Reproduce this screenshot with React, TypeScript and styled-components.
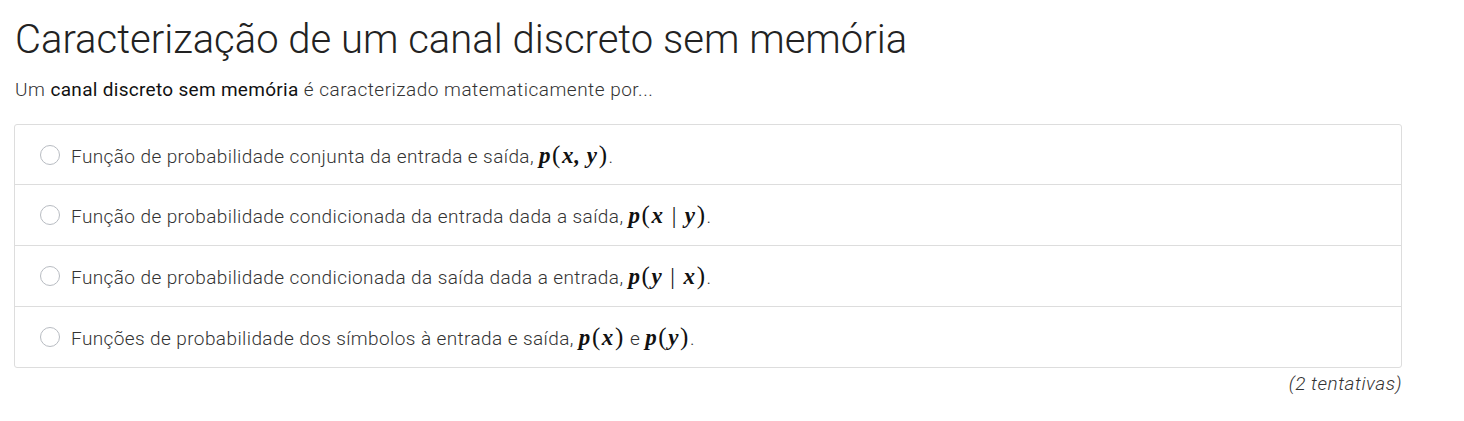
import React from "react";
import styled, { createGlobalStyle } from "styled-components";

const Global = createGlobalStyle`
  html, body { margin: 0; padding: 0; background: #fff; }
  body { font-family: Roboto, "Liberation Sans", sans-serif; color: #333; }
`;

const Page = styled.div`
  padding: 14px 62px 0 15px;
  display: flex;
  flex-direction: column;
`;

const Title = styled.h1`
  margin: 0;
  font-weight: 300;
  font-size: 40px;
  line-height: 52px;
  color: #222;
`;

const Lead = styled.p`
  margin: 12px 0 0 0;
  font-weight: 300;
  font-size: 19px;
  letter-spacing: 0.5px;
  line-height: 24px;
  color: #333;
  b { font-weight: 400; color: #111; letter-spacing: 0.3px; }
`;

const List = styled.div`
  margin: 22px 0 0 -1px;
  border: 1px solid #ddd;
  border-radius: 3px;
  display: flex;
  flex-direction: column;
`;

const Row = styled.label<{ $first?: boolean }>`
  display: flex;
  align-items: center;
  height: ${(p) => (p.$first ? "59px" : "60px")};
  padding: 0 0 0 25px;
  border-top: ${(p) => (p.$first ? "none" : "1px solid #ddd")};
  font-size: 19px;
  letter-spacing: 0.4px;
  font-weight: 300;
  color: #333;
  cursor: pointer;
`;

const Radio = styled.span`
  width: 18px;
  height: 18px;
  border: 1px solid #b8bcc2;
  border-radius: 50%;
  box-sizing: content-box;
  flex: none;
  margin-right: 11px;
`;

const Math = styled.span`
  font-family: "Liberation Serif", "DejaVu Serif", serif;
  font-style: italic;
  font-weight: 700;
  font-size: 23px;
  letter-spacing: 0.6px;
  color: #111;
`;

const Paren = styled.span`
  font-style: normal;
  font-weight: 400;
  font-size: 25px;
  margin: 0 1px;
`;

const Bar = styled.span`
  font-style: normal;
  font-weight: 400;
  margin: 0 8px;
`;

const Footer = styled.div`
  text-align: right;
  font-style: italic;
  font-weight: 300;
  font-size: 19px;
  letter-spacing: 0.5px;
  margin-top: 4px;
  color: #333;
`;

const P = ({ children }: { children: React.ReactNode }) => (
  <Math>
    p<Paren>(</Paren>
    {children}
    <Paren>)</Paren>
  </Math>
);

export default function App() {
  return (
    <>
      <Global />
      <Page>
        <Title>Caracterização de um canal discreto sem memória</Title>
        <Lead>
          Um <b>canal discreto sem memória</b> é caracterizado matematicamente por...
        </Lead>
        <List>
          <Row $first>
            <Radio />
            <span>
              Função de probabilidade conjunta da entrada e saída, <P>x, y</P>.
            </span>
          </Row>
          <Row>
            <Radio />
            <span>
              Função de probabilidade condicionada da entrada dada a saída,{" "}
              <P>
                x<Bar>|</Bar>y
              </P>
              .
            </span>
          </Row>
          <Row>
            <Radio />
            <span>
              Função de probabilidade condicionada da saída dada a entrada,{" "}
              <P>
                y<Bar>|</Bar>x
              </P>
              .
            </span>
          </Row>
          <Row>
            <Radio />
            <span>
              Funções de probabilidade dos símbolos à entrada e saída, <P>x</P> e{" "}
              <P>y</P>.
            </span>
          </Row>
        </List>
        <Footer>(2 tentativas)</Footer>
      </Page>
    </>
  );
}
